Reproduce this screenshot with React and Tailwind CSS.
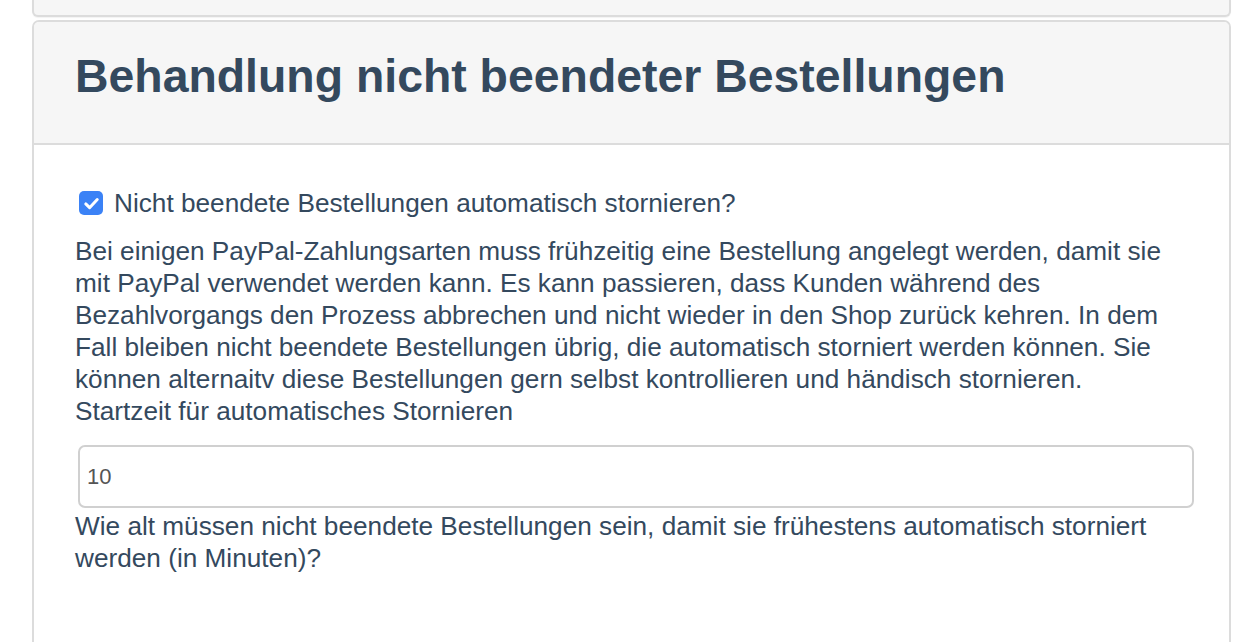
export default function App() {
  const font = { fontFamily: '"Liberation Sans", Arial, sans-serif' };
  return (
    <div className="w-[1250px] h-[642px] overflow-hidden bg-white text-[#34495e]" style={font}>
      <div className="ml-[32px] w-[1199px]">
        <div className="h-[17px] bg-[#f6f6f6] border-2 border-t-0 border-[#dcdcdc] rounded-b-[6px] shadow-[0_1px_1px_rgba(0,0,0,0.05)]" />
        <div className="mt-[3px] border-2 border-b-0 border-[#dcdcdc] rounded-t-[7px] h-[640px] overflow-hidden">
          <div className="h-[123px] bg-[#f6f6f6] border-b-2 border-[#dcdcdc] pl-[41px] flex items-center">
            <h1 className="text-[46.4px] font-bold leading-none text-[#34495e] -mt-[13px]">
              Behandlung nicht beendeter Bestellungen
            </h1>
          </div>
          <div className="pl-[41px] pr-[35px] pt-[42px] text-[26.2px] leading-[32px] whitespace-nowrap">
            <label className="flex items-center h-[32px]">
              <span className="ml-[4px] w-[24px] h-[24px] rounded-[5px] bg-[#3b82f6] flex items-center justify-center shrink-0">
                <svg width="17" height="17" viewBox="0 0 16 16" fill="none">
                  <path d="M2.6 8.4 L6.2 11.9 L13.4 4.2" stroke="white" strokeWidth="2.8" strokeLinecap="round" strokeLinejoin="round" />
                </svg>
              </span>
              <span className="ml-[11px]">Nicht beendete Bestellungen automatisch stornieren?</span>
            </label>
            <p className="mt-[16px]">
              Bei einigen PayPal-Zahlungsarten muss frühzeitig eine Bestellung angelegt werden, damit sie
              <br />
              mit PayPal verwendet werden kann. Es kann passieren, dass Kunden während des
              <br />
              Bezahlvorgangs den Prozess abbrechen und nicht wieder in den Shop zurück kehren. In dem
              <br />
              Fall bleiben nicht beendete Bestellungen übrig, die automatisch storniert werden können. Sie
              <br />
              können alternaitv diese Bestellungen gern selbst kontrollieren und händisch stornieren.
              <br />
              Startzeit für automatisches Stornieren
            </p>
            <div className="mt-[18px] ml-[3px] h-[63px] border-2 border-[#d0d0d0] rounded-[7px] flex items-center pl-[7px] text-[22px] text-[#555]">
              10
            </div>
            <p className="mt-[2px]">
              Wie alt müssen nicht beendete Bestellungen sein, damit sie frühestens automatisch storniert
              <br />
              werden (in Minuten)?
            </p>
          </div>
        </div>
      </div>
    </div>
  );
}
